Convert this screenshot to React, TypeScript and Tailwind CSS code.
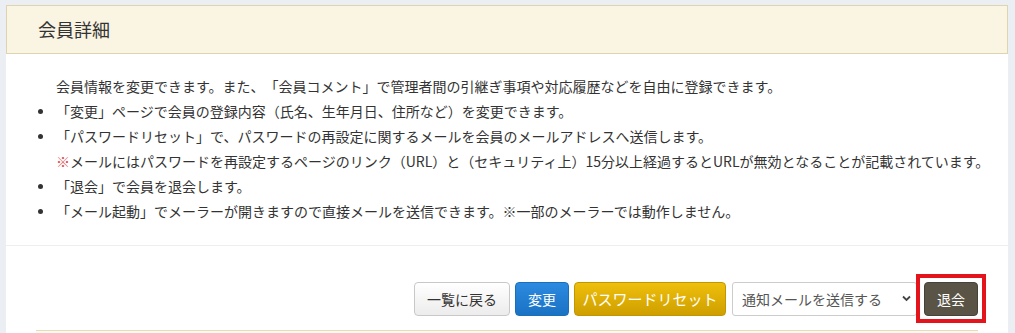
const FONT = { fontFamily: '"Noto Sans CJK JP", "Noto Sans", sans-serif' };

function Bullet({ children }: { children: React.ReactNode }) {
  return (
    <li className="relative">
      <span className="absolute left-[-18px] top-[10px] h-[5px] w-[5px] rounded-full bg-[#333]" />
      {children}
    </li>
  );
}

export default function App() {
  return (
    <div
      className="min-h-[333px] bg-[#ebeef3] pl-[6px] pr-[7px] pt-[5px] text-[#333] [text-spacing-trim:space-all]"
      style={FONT}
    >
      <div className="bg-white">
        {/* 見出し */}
        <div className="flex h-[49px] items-center border border-[#ddd5b2] bg-[#faf4e3] pl-[31px]">
          <h2 className="text-[18px] font-normal text-[#333]">会員詳細</h2>
        </div>

        {/* 説明 */}
        <div className="border-b border-[#eeeeee] pb-[21px] pl-[50px] pt-[20px] text-[14px] leading-[25px]">
          <p>
            会員情報を変更できます。また、「会員コメント」で管理者間の引継ぎ事項や対応履歴などを自由に登録できます。
          </p>
          <ul>
            <Bullet>「変更」ページで会員の登録内容（氏名、生年月日、住所など）を変更できます。</Bullet>
            <Bullet>
              「パスワードリセット」で、パスワードの再設定に関するメールを会員のメールアドレスへ送信します。
            </Bullet>
            <li>
              <span className="text-[#e04848]">※</span>
              メールにはパスワードを再設定するページのリンク（URL）と（セキュリティ上）15分以上経過するとURLが無効となることが記載されています。
            </li>
            <Bullet>「退会」で会員を退会します。</Bullet>
            <Bullet>
              「メール起動」でメーラーが開きますので直接メールを送信できます。※一部のメーラーでは動作しません。
            </Bullet>
          </ul>
        </div>

        {/* 操作ボタン */}
        <div className="px-[30px] pt-[36px]">
          <div className="flex items-center justify-end text-[14px]">
            <button className="h-[34px] w-[96px] rounded-[4px] border border-[#c8c8c8] bg-gradient-to-b from-white to-[#ececec] text-[#333]">
              一覧に戻る
            </button>
            <button className="ml-[5px] h-[34px] w-[54px] rounded-[4px] border border-[#1a6fb8] bg-gradient-to-b from-[#2b8ae0] to-[#1a72c4] text-white">
              変更
            </button>
            <button className="ml-[5px] h-[34px] w-[152px] rounded-[4px] border border-[#c29600] bg-gradient-to-b from-[#eebf0c] to-[#cf9f00] text-[15px] text-white">
              パスワードリセット
            </button>
            <div className="relative ml-[6px] h-[34px] w-[185px]">
              <select
                className="h-full w-full appearance-none rounded-[3px] border border-[#cccccc] bg-white pl-[9px] text-[14px] text-[#555] outline-none"
                style={FONT}
                defaultValue="notify"
              >
                <option value="notify">通知メールを送信する</option>
                <option value="none">通知メールを送信しない</option>
              </select>
              <svg
                className="pointer-events-none absolute right-[6px] top-[13px]"
                width="9"
                height="7"
                viewBox="0 0 9 7"
              >
                <path d="M1 1.5 L4.5 5 L8 1.5" fill="none" stroke="#444" strokeWidth="1.8" />
              </svg>
            </div>
            <div className="relative ml-[7px]">
              <button className="h-[34px] w-[54px] rounded-[4px] border border-[#46413a] bg-[#5a5446] text-white">
                退会
              </button>
              <span className="pointer-events-none absolute left-[-8px] top-[-8px] h-[49px] w-[70px] border-[4px] border-[#e3141c]" />
            </div>
          </div>
          <div className="mt-[14px] h-[3px] border-t border-[#e6ddb8] bg-[#fdfaf0]" />
        </div>
      </div>
    </div>
  );
}
